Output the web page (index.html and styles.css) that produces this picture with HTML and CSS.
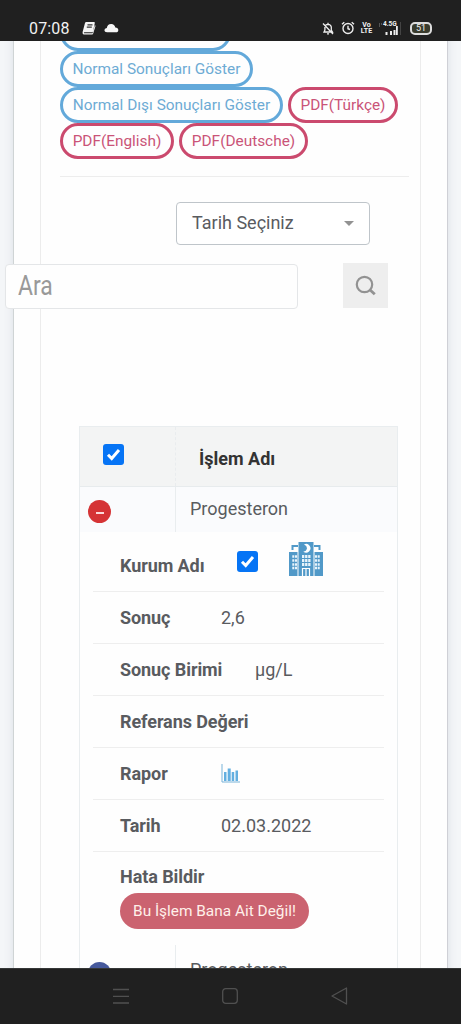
FILE: index.html
```html
<!DOCTYPE html>
<html lang="tr">
<head>
<meta charset="utf-8">
<title>Tahliller</title>
<link rel="stylesheet" href="styles.css">
</head>
<body>
<header class="status">
  <span class="clock">07:08</span>
  <svg class="book" width="14" height="14" viewBox="0 0 14 14"><path d="M4.200 1H12q1 0 .8 1L11 10.500q-.2.800-1 .800H2.500q-1 0-.5.900h8.500l2.300-8 .8.500-2.500 8q-.2.700-1 .700H1.500Q.2 12.700.6 11L3 2q.3-1 1.200-1z" fill="#f4f4f4"/><path d="M5.500 3.800h5M4.800 6.200h5" stroke="#333" stroke-width="1.200"/></svg>
  <svg class="cloud" width="15" height="10" viewBox="0 0 15 10"><path d="M3 9.300Q.4 9.300.4 7.300T2.800 5Q3.500 1.200 7 1t4.300 3.600q2.900.1 3 2.400t-2.500 2.300z" fill="#f6f6f6"/></svg>
  <div class="indicators">
    <svg width="12" height="13" viewBox="0 0 12 13" fill="none" stroke="#eee" stroke-width="1.300"><path d="M2 10h8.500L9.300 8V5Q9 2.500 6 2.300 3 2.500 2.900 5v3zM6 2.200V.8M5 11.800h2M1 1.500l10 10.500"/></svg>
    <svg width="14" height="14" viewBox="0 0 14 14" fill="none" stroke="#eee" stroke-width="1.400"><circle cx="7" cy="7.500" r="5"/><path d="M7 4.700v3l2 .8M1 3.300L3.300 1.200M10.700 1.200L13 3.300"/></svg>
    <span class="volte"><b>Vo</b><b>LTE</b></span>
    <span class="signal"><b>4.5G</b><svg width="24" height="13" viewBox="0 0 24 13"><path d="M7.500 10h2v3h-2zM12 9h2v4h-2zM15.500 8h2v5h-2zM18 4h1.800v9H18z" fill="#eee"/><path d="M22.500 0v13" stroke="#444"/><path d="M1 2h1M3 2h1M1 4h1" stroke="#888"/></svg></span>
    <span class="battery">51</span>
  </div>
</header>
<main class="page">
  <div class="card">
    <div class="panel">
      <div class="actions">
        <div class="line"><a class="pill w-first">&nbsp;</a></div>
        <div class="line"><a class="pill w-normal">Normal Sonuçları Göster</a></div>
        <div class="line"><a class="pill w-abnormal">Normal Dışı Sonuçları Göster</a><a class="pill red w-tr">PDF(Türkçe)</a></div>
        <div class="line"><a class="pill red w-en">PDF(English)</a><a class="pill red w-de">PDF(Deutsche)</a></div>
      </div>
      <div class="select"><span>Tarih Seçiniz</span><i class="caret"></i></div>
      <div class="search">
        <div class="field"><span class="hint">Ara</span></div>
        <div class="find"><svg width="22" height="22" viewBox="0 0 22 22" fill="none" stroke="#929292" stroke-width="2.200"><circle cx="9.500" cy="9.500" r="7.700"/><path d="M14.500 14.500l5.300 4.800" stroke-width="2.800"/></svg></div>
      </div>
      <div class="table">
        <div class="row head"><div class="cell"><span class="check"><svg width="15" height="15" viewBox="0 0 15 15"><path d="M2 7.700l3.700 3.800L13 3" fill="none" stroke="#fff" stroke-width="3"/></svg></span></div><div class="cell name">İşlem Adı</div></div>
        <div class="row odd"><div class="cell"><span class="toggle"><i class="minus"></i></span></div><div class="cell name">Progesteron</div></div>
        <div class="details">
          <div class="item first"><b class="org">Kurum Adı</b><span class="check"><svg width="15" height="15" viewBox="0 0 15 15"><path d="M2 7.700l3.700 3.800L13 3" fill="none" stroke="#fff" stroke-width="3"/></svg></span>
            <svg class="hospital" width="34" height="35" viewBox="0 0 34 35"><g fill="#5199c8"><path d="M9.500 1h15v34h-15zM0 11h8.500v24H0zM25.500 11H34v24h-8.500z"/><path d="M2.500 9V4H9v2H4.500v3zM31.500 9V4H25v2h4.500v3z"/></g><path d="M15 3.500A4.300 4.300 0 1 1 14.300 10.500 4 4 0 0 0 18 7.200Q18 4.800 15 3.500z" fill="#fff"/><g stroke="#e8f4fb"><path d="M13 15.500h8.500M13 19.500h8.500M13 23.500h8.500" stroke-width="2.800" stroke-dasharray="2.300 .8"/><path d="M3.300 15.500H8M3.300 19.500H8M3.300 23.500H8M3.300 27H8M26 15.500h5M26 19.500h5M26 23.500h5M26 27h5" stroke-width="2.300" stroke-dasharray="2 .7"/></g><path d="M13.500 35v-7.500h7V35M17 28v7" fill="none" stroke="#fff" stroke-width="1.200"/></svg></div>
          <div class="item"><b>Sonuç</b><span>2,6</span></div>
          <div class="item"><b class="unit">Sonuç Birimi</b><span>µg/L</span></div>
          <div class="item"><b>Referans Değeri</b></div>
          <div class="item"><b>Rapor</b><svg class="chart" width="19" height="19" viewBox="0 0 19 19"><path d="M1 0v18h18" fill="none" stroke="#79b3d8"/><path d="M3 8h2.500v9H3zM6.700 4.500h3v12.500h-3zM10.700 8h2.500v9h-2.500zM14.500 6.500H17V17h-2.500z" fill="#63afe0"/></svg></div>
          <div class="item"><b>Tarih</b><span>02.03.2022</span></div>
          <div class="item last"><b>Hata Bildir</b><a class="report">Bu İşlem Bana Ait Değil!</a></div>
        </div>
        <div class="row next"><div class="cell"><span class="toggle blue"></span></div><div class="cell name">Progesteron</div></div>
      </div>
    </div>
  </div>
</main>
<footer class="nav">
  <svg width="16" height="16" viewBox="0 0 16 16"><path d="M0 1.500h16M0 8.300h16M0 15h16"/></svg>
  <svg width="16" height="16" viewBox="0 0 16 16"><rect x=".7" y=".7" width="14.600" height="14.600" rx="3"/></svg>
  <svg width="17" height="18" viewBox="0 0 17 18"><path d="M15.500 1v16L1 9z" stroke-linejoin="round"/></svg>
</footer>
</body>
</html>
```
FILE: styles.css
```css
* { box-sizing: border-box; }
body { margin: 0; width: 461px; height: 1024px; overflow: hidden; display: flex; flex-direction: column; font-family: Roboto, sans-serif; color: #595b5f; background: #f4f6f8; }
.status { height: 41px; flex: none; background: #202020; color: #f2f2f2; display: flex; align-items: center; padding: 15px 29px 0; }
.clock { font-size: 16px; width: 53px; letter-spacing: .15px; }
.cloud { margin-left: 8px; }
.indicators { margin-left: auto; display: flex; align-items: center; }
.indicators > svg + svg { margin-left: 7px; }
.volte { width: 11px; margin-left: 6px; display: flex; flex-direction: column; align-items: center; font-size: 7px; line-height: 6.5px; }
.signal { position: relative; width: 24px; height: 13px; margin-left: 6px; }
.signal b { position: absolute; left: 5px; top: -1px; font-size: 6.5px; line-height: 7px; }
.signal svg { display: block; }
.battery { width: 22px; height: 13px; border: 2px solid #ddd; border-radius: 5px; margin-left: 8px; font-size: 9px; line-height: 9px; text-align: center; background: #393b2d; }
.page { flex: 1; min-height: 0; overflow: hidden; padding: 0 14px; }
.card { height: 960px; background: #fefefe; border-left: 1px solid #cfd4d5; border-right: 1px solid #cfd0d6; margin-left: -1px; margin-right: -1px; box-shadow: 0 0 9px rgba(90,100,125,.15); padding: 0 26px; }
.panel { height: 960px; border-left: 1px solid #ececec; border-right: 1px solid #ececec; }
.actions { margin: -26px 11px 0 19px; height: 162px; border-bottom: 1px solid #ededed; }
.line { height: 36px; display: flex; gap: 5px; }
.pill { height: 36px; flex: none; border: 3px solid #63a9da; border-radius: 18px; color: #6dabd4; font-size: 15.4px; line-height: 30px; text-align: center; white-space: nowrap; }
.red { border-color: #cb4a6e; color: #ca5478; }
.w-first { width: 171px; }
.w-normal { width: 193px; }
.w-abnormal { width: 223px; }
.w-tr { width: 110px; }
.w-en { width: 114px; }
.w-de { width: 129px; }
.select { width: 194px; height: 43px; margin: 25px 0 0 135px; padding: 0 15px 0 16px; border: 1px solid #bfc5ca; border-radius: 4px; display: flex; align-items: center; justify-content: space-between; font-size: 18px; line-height: 20px; background: #fff; }
.select span { padding-bottom: 2px; margin-left: -1px; }
.caret { border: 5px solid transparent; border-top-color: #929292; border-bottom: 0; }
.search { display: flex; align-items: flex-start; margin: 18px 0 0 -36px; }
.field { position: relative; flex: none; width: 293px; height: 45px; margin-top: 1px; border: 1px solid #e4e6e8; border-radius: 4px; background: #fefefe; padding-left: 12px; font-size: 27px; line-height: 43px; color: #999; }
.hint { display: inline-block; transform: scaleX(.85); transform-origin: left; }
.find { flex: none; width: 45px; height: 45px; margin-left: 45px; background: #eee; display: grid; place-items: center; }
.table { width: 319px; margin: 117px 0 0 38px; border: 1px solid #e9edef; }
.row { display: flex; }
.cell { width: 96px; flex: none; border-right: 1px solid #e9edef; }
.name { width: auto; flex: 1; border: 0; padding-left: 14px; font-size: 18px; }
.head { height: 60px; background: #f3f4f4; border-bottom: 1px solid #e7ebed; color: #333; }
.head .cell { border-right: 1px dashed #e9ecee; padding: 17px 0 0 23px; }
.head .name { font-weight: 700; line-height: 30px; border: 0; }
.odd { height: 45px; background: #fafbfd; }
.odd .name { line-height: 43px; }
.check { display: grid; place-items: center; width: 21px; height: 21px; border-radius: 3px; background: #0674f5; }
.toggle { display: grid; place-items: center; width: 23px; height: 23px; margin: 13px 0 0 8px; border-radius: 50%; background: #d53335; }
.minus { width: 8px; height: 2px; margin-top: 3px; background: #fbdada; }
.blue { background: #46599c; }
.details { padding: 0 13px; height: 413px; }
.item { height: 52px; display: flex; align-items: center; padding: 0 0 1px 27px; border-bottom: 1px solid #eee; font-size: 18px; white-space: nowrap; }
.item b { width: 101px; flex: none; letter-spacing: -.08px; }
.item .unit { width: 135px; }
.item .org { width: 117px; padding-top: 8px; }
.first { height: 60px; }
.hospital { margin: 0 0 5px 31px; }
.last { display: block; border: 0; padding-top: 13px; height: 93px; }
.last b { display: block; width: auto; line-height: 24px; }
.report { display: block; margin-top: 4px; width: 189px; height: 36px; border-radius: 18px; background: #cb6370; color: #fff0ea; font-size: 15.4px; line-height: 36px; text-align: center; }
.next .name { line-height: 50px; }
.next .toggle { margin-top: 17px; }
.nav { height: 56px; flex: none; background: #202020; border-top: 1px solid #353737; display: flex; align-items: center; padding: 0 113px 2px; justify-content: space-between; }
.nav svg { fill: none; stroke: #505050; stroke-width: 1.300; }
```
